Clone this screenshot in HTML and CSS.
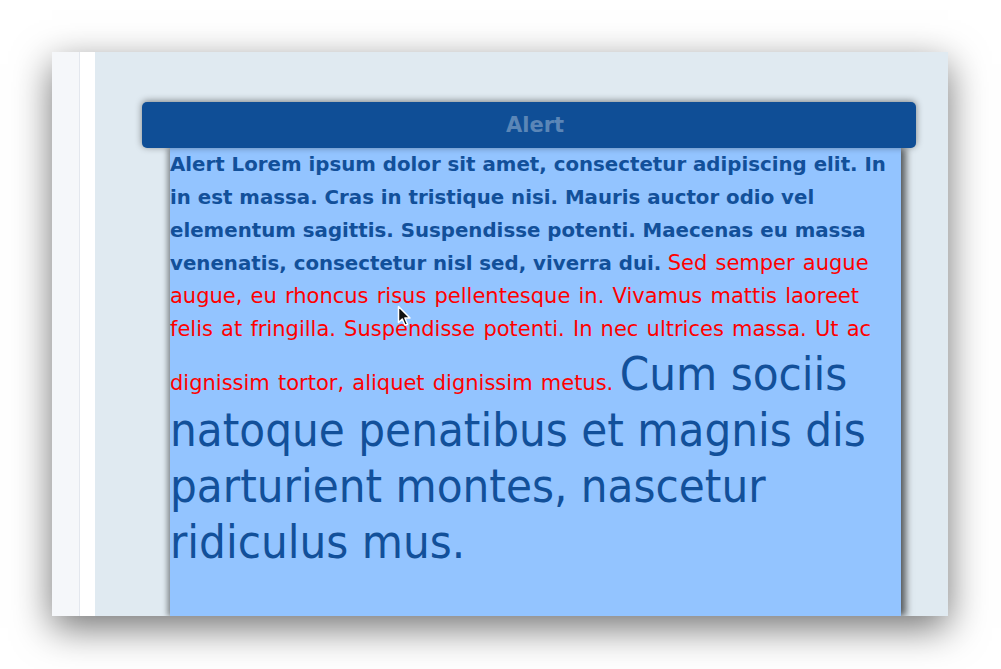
FILE: index.html
```html
<!DOCTYPE html>
<html>
<head>
<meta charset="utf-8">
<link rel="stylesheet" href="styles.css">
</head>
<body>
<div class="window">
  <div class="rail"></div>
  <div class="gutter"></div>
  <div class="main">
    <div class="dialog-head">Alert</div>
    <div class="dialog-body">
      <span class="lead">Alert Lorem ipsum dolor sit amet, consectetur adipiscing elit. In in est massa. Cras in tristique nisi. Mauris auctor odio vel elementum sagittis. Suspendisse potenti. Maecenas eu massa venenatis, consectetur nisl sed, viverra dui.</span>
      <span class="warn">Sed semper augue augue, eu rhoncus risus pellentesque in. Vivamus mattis laoreet felis at fringilla. Suspendisse potenti. In nec ultrices massa. Ut ac dignissim tortor, aliquet dignissim metus.</span>
      <span class="big">Cum sociis natoque penatibus et magnis dis parturient montes, nascetur ridiculus mus.</span>
      <svg class="cursor" width="15" height="23" viewBox="0 0 15 23"><path d="M1.5 1.5 L1.5 17.5 L5.3 14 L8 20.3 L10.6 19.2 L7.9 13 L13 13 Z" fill="#111" stroke="#fff" stroke-width="1.5" stroke-linejoin="round"/></svg>
    </div>
  </div>
</div>
</body>
</html>
```
FILE: styles.css
```css
html, body {
  margin: 0;
  padding: 0;
  background: #ffffff;
}
body {
  width: 1001px;
  height: 669px;
  overflow: hidden;
}
.window {
  margin: 52px 0 0 52px;
  width: 896px;
  height: 564px;
  display: flex;
  overflow: hidden;
  box-shadow: 0 12px 36px rgba(0, 0, 0, 0.55);
}
.rail {
  width: 27px;
  background: #f5f7fa;
  border-right: 1px solid #e3e7ee;
}
.gutter {
  width: 15px;
  background: #ffffff;
}
.main {
  flex: 1;
  background: #e0eaf1;
  display: flex;
  flex-direction: column;
  padding: 50px 32px 0 47px;
}
.dialog-head {
  position: relative;
  z-index: 2;
  height: 46px;
  background: #0f4e96;
  border-radius: 5px;
  box-shadow: 0 -1px 7px rgba(0, 0, 0, 0.45);
  color: #5b86b7;
  font-family: "DejaVu Sans", sans-serif;
  font-weight: bold;
  font-size: 21px;
  line-height: 46px;
  text-align: center;
  padding-left: 12px;
}
.dialog-body {
  position: relative;
  z-index: 1;
  flex: 1;
  margin: 0 15px 0 28px;
  background: #93c4ff;
  box-shadow: 5px 0 7px rgba(0, 0, 0, 0.6), -3px 0 5px rgba(0, 0, 0, 0.35);
  font-family: "DejaVu Sans", sans-serif;
  font-size: 20px;
  line-height: 33px;
}
.lead {
  font-weight: bold;
  color: #12509a;
  font-size: 19.8px;
}
.warn {
  color: #ff0000;
  font-size: 21px;
  word-spacing: 1.5px;
}
.big {
  font-family: "DejaVu Sans Condensed", "DejaVu Sans", sans-serif;
  font-stretch: condensed;
  font-size: 47px;
  line-height: 56px;
  color: #12509a;
}
.cursor {
  position: absolute;
  left: 227px;
  top: 157px;
}
```
